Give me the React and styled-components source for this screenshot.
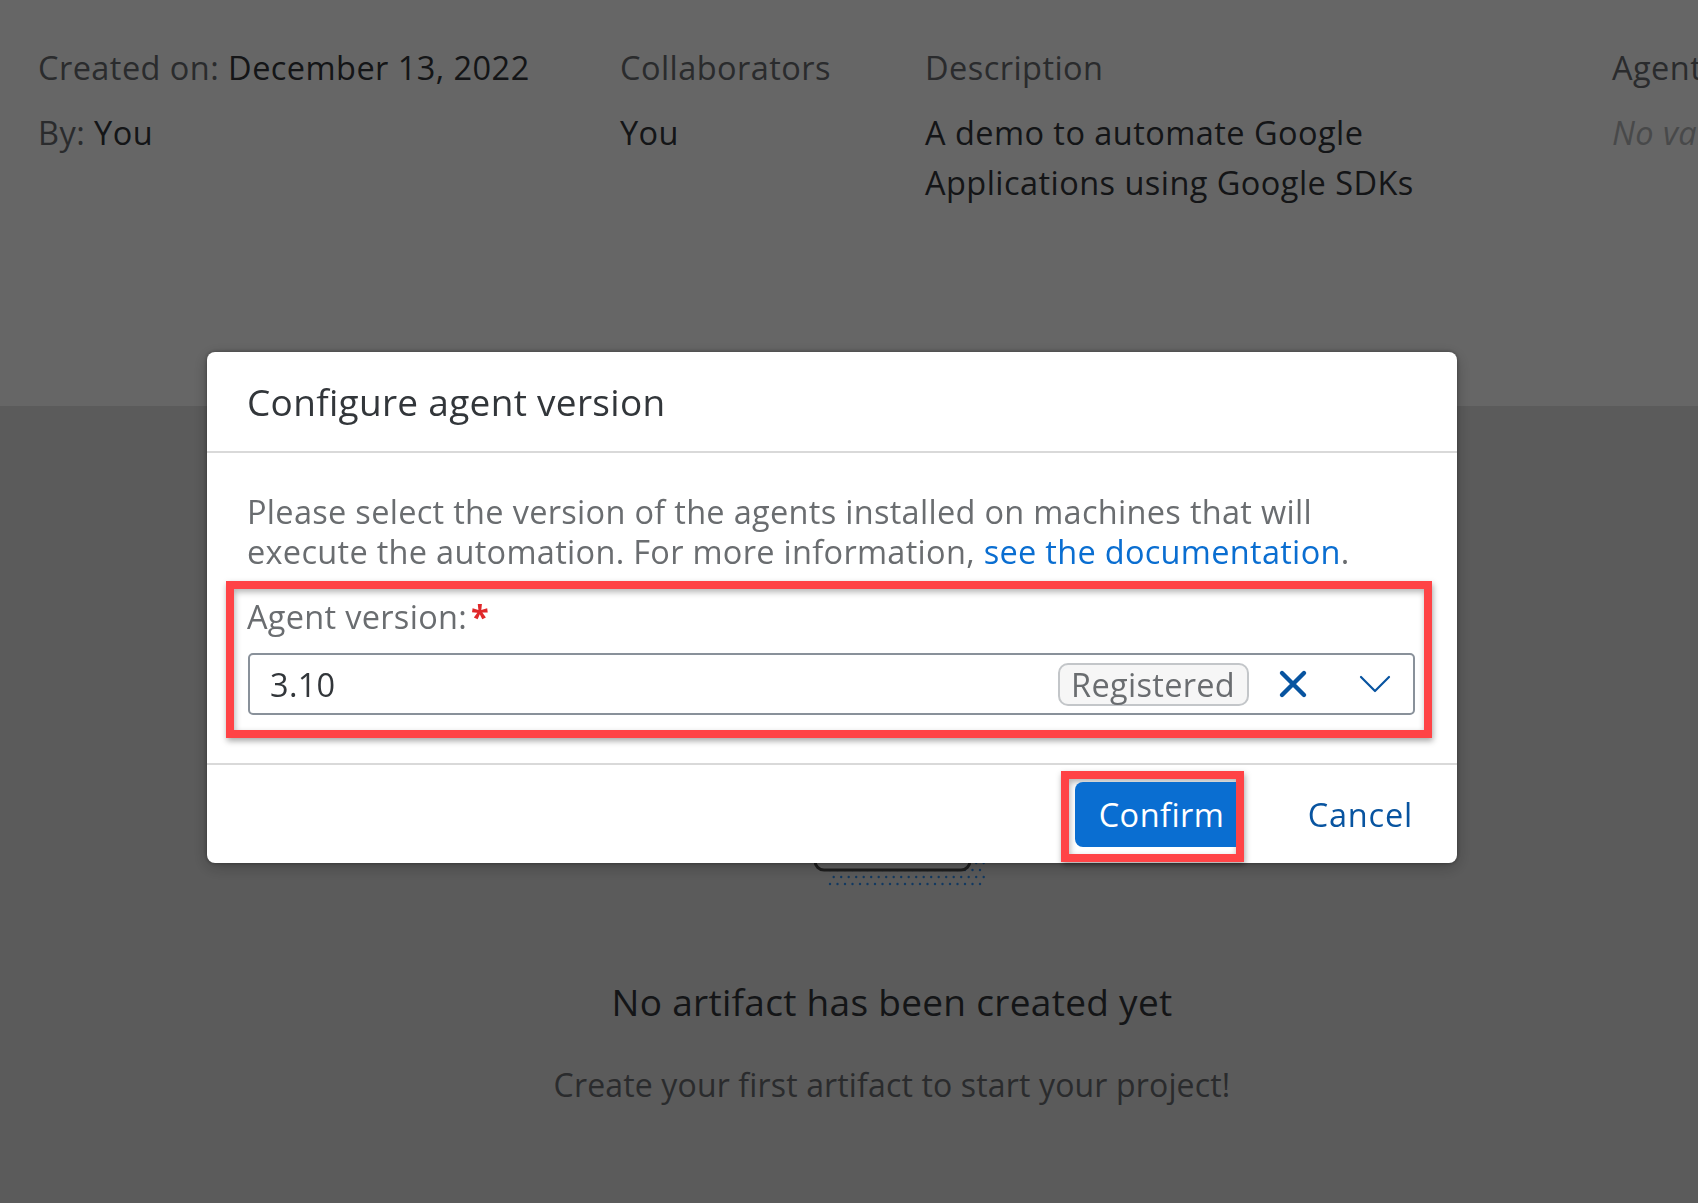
import React from "react";
import styled, { createGlobalStyle } from "styled-components";

const GlobalStyle = createGlobalStyle`
  html, body {
    margin: 0;
    padding: 0;
    overflow: hidden;
  }
  body {
    font-family: "Open Sans", "Noto Sans", Arial, sans-serif;
    color: #32363a;
  }
  * { box-sizing: border-box; }
`;

const Page = styled.div`
  width: 1698px;
  height: 1203px;
  display: flex;
  flex-direction: column;
  overflow: hidden;
  background: #e3e3e3;
`;

const ObjectHeader = styled.section`
  height: 406px;
  flex: none;
  background: #ffffff;
  padding: 43px 0 0 38px;
  display: grid;
  grid-template-columns: 582px 305px 687px 400px;
  align-content: start;
  font-size: 32.5px;
  letter-spacing: 0.45px;
  line-height: 50px;
`;

const InfoColumn = styled.div`
  display: flex;
  flex-direction: column;
  gap: 15px;
  white-space: ${(p) => (p.$wrap ? "normal" : "nowrap")};
`;

const InfoLine = styled.div`
  max-width: ${(p) => p.$max || "none"};
  color: ${(p) => (p.$muted ? "#6a6d70" : "#32363a")};
  font-style: ${(p) => (p.$italic ? "italic" : "normal")};
  ${(p) => p.$empty && "color: #b4b6b8;"}
`;

const Label = styled.span`
  color: #6a6d70;
`;

const Value = styled.span`
  color: #32363a;
`;

const EmptyState = styled.section`
  flex: 1;
  display: flex;
  flex-direction: column;
  align-items: center;
  padding: 234px 0 0 86px;
`;

const Illustration = styled.svg`
  display: block;
  width: 200px;
  height: 250px;
`;

const EmptyTitle = styled.div`
  margin-top: 88px;
  font-size: 37px;
  letter-spacing: 0.3px;
  line-height: 48px;
  color: #32363a;
`;

const EmptyText = styled.div`
  margin-top: 39px;
  font-size: 32px;
  letter-spacing: 0.15px;
  line-height: 40px;
  color: #6a6d70;
`;

const Overlay = styled.div`
  position: fixed;
  inset: 0;
  background: rgba(0, 0, 0, 0.6);
`;

const Dialog = styled.div`
  position: fixed;
  left: 207px;
  top: 352px;
  width: 1250px;
  height: 511px;
  background: #ffffff;
  border-radius: 8px;
  box-shadow: 0 0 4px rgba(0, 0, 0, 0.35), 0 4px 16px rgba(0, 0, 0, 0.25);
  display: flex;
  flex-direction: column;
`;

const DialogHeader = styled.header`
  height: 101px;
  flex: none;
  display: flex;
  align-items: center;
  padding: 0 40px;
  border-bottom: 2px solid #d9d9d9;
`;

const DialogTitle = styled.h2`
  margin: 0;
  font-size: 37px;
  letter-spacing: 0.3px;
  font-weight: 400;
  color: #32363a;
  line-height: 48px;
`;

const DialogBody = styled.div`
  padding: 39px 40px 25px 40px;
  display: flex;
  flex-direction: column;
  font-size: 32.5px;
  letter-spacing: 0.3px;
`;

const Intro = styled.p`
  margin: 0;
  line-height: 40px;
  color: #6a6d70;
`;

const DocLink = styled.a`
  color: #0a6ed1;
  text-decoration: none;
`;

const Highlight = styled.div`
  border: 8px solid #ff4346;
  box-shadow: 1px 3px 6px rgba(0, 0, 0, 0.35), inset 1px 3px 6px rgba(0, 0, 0, 0.3);
`;

const FieldHighlight = styled(Highlight)`
  margin: 9px -15px 0 -21px;
  padding: 8px 9px 15px 14px;
  display: flex;
  flex-direction: column;
  gap: 16px;
`;

const FieldLabel = styled.label`
  line-height: 40px;
  color: #6a6d70;
  margin-left: -1px;
  display: flex;
  align-items: baseline;
`;

const Required = styled.span`
  color: #e0282a;
  font-weight: 700;
  margin-left: 4px;
`;

const ComboBox = styled.div`
  height: 62px;
  border: 2px solid #89919a;
  border-radius: 5px;
  display: flex;
  align-items: center;
  padding-left: 20px;
  background: #fff;
`;

const ComboValue = styled.span`
  flex: 1;
  color: #32363a;
`;

const Tag = styled.span`
  height: 43px;
  display: inline-flex;
  align-items: center;
  padding: 0 12px 0 11px;
  border: 2px solid #c3c6c9;
  border-radius: 10px;
  background: #f6f6f6;
  color: #6a6d70;
  margin-right: 14px;
`;

const IconButton = styled.span`
  width: ${(p) => p.$w}px;
  height: 58px;
  display: flex;
  align-items: center;
  justify-content: center;
  margin-right: ${(p) => p.$mr || 0}px;
  color: #0854a0;
`;

const DialogFooter = styled.footer`
  margin-top: auto;
  height: 101px;
  border-top: 2px solid #d9d9d9;
  display: flex;
  justify-content: flex-end;
  align-items: flex-end;
  padding: 0 24px 1px 0;
  gap: 44px;
  font-size: 32.5px;
  letter-spacing: 0.45px;
`;

const ConfirmHighlight = styled(Highlight)`
  width: 183px;
  height: 91px;
  padding: 3px 0 7px 6px;
  overflow: hidden;
`;

const ConfirmButton = styled.button`
  width: 180px;
  height: 65px;
  border: none;
  border-radius: 8px;
  background: #0a6ed1;
  color: #ffffff;
  font: inherit;
  letter-spacing: inherit;
  padding: 0 0 0 24px;
  text-align: left;
`;

const CancelButton = styled.button`
  height: 65px;
  margin-bottom: 15px;
  border: none;
  background: transparent;
  color: #0854a0;
  font: inherit;
  letter-spacing: 0.8px;
  padding: 0 20px;
`;

export default function App() {
  const dots = [];
  for (let r = 0; r < 30; r++) {
    for (let c = 0; c < 21; c++) {
      dots.push(
        <circle key={`${r}-${c}`} cx={38 + c * 7.5 + (r % 2) * 3.7} cy={244 - r * 7} r="1.2" fill="#2a8cf0" />
      );
    }
  }
  return (
    <>
      <GlobalStyle />
      <Page>
        <ObjectHeader>
          <InfoColumn>
            <InfoLine>
              <Label>Created on: </Label>
              <Value>December 13, 2022</Value>
            </InfoLine>
            <InfoLine>
              <Label>By: </Label>
              <Value>You</Value>
            </InfoLine>
          </InfoColumn>
          <InfoColumn>
            <InfoLine $muted>Collaborators</InfoLine>
            <InfoLine>You</InfoLine>
          </InfoColumn>
          <InfoColumn $wrap>
            <InfoLine $muted>Description</InfoLine>
            <InfoLine $max="540px">A demo to automate Google Applications using Google SDKs</InfoLine>
          </InfoColumn>
          <InfoColumn>
            <InfoLine $muted>Agent Version</InfoLine>
            <InfoLine $italic $empty>No value</InfoLine>
          </InfoColumn>
        </ObjectHeader>
        <EmptyState>
          <Illustration viewBox="0 0 200 250">
            {dots}
            <rect x="23" y="60" width="155" height="170" rx="9" fill="#f1f1f1" stroke="#4a4a4a" strokeWidth="3" />
          </Illustration>
          <EmptyTitle>No artifact has been created yet</EmptyTitle>
          <EmptyText>Create your first artifact to start your project!</EmptyText>
        </EmptyState>
      </Page>
      <Overlay />
      <Dialog role="dialog" aria-label="Configure agent version">
        <DialogHeader>
          <DialogTitle>Configure agent version</DialogTitle>
        </DialogHeader>
        <DialogBody>
          <Intro>
            Please select the version of the agents installed on machines that will execute the automation. For more
            information, <DocLink href="#">see the documentation</DocLink>.
          </Intro>
          <FieldHighlight>
            <FieldLabel>
              Agent version:<Required>*</Required>
            </FieldLabel>
            <ComboBox>
              <ComboValue>3.10</ComboValue>
              <Tag>Registered</Tag>
              <IconButton $w={60} $mr={14}>
                <svg width="30" height="30" viewBox="0 0 30 30">
                  <path d="M4 4 L26 26 M26 4 L4 26" stroke="currentColor" strokeWidth="4.4" strokeLinecap="round" />
                </svg>
              </IconButton>
              <IconButton $w={76}>
                <svg width="32" height="18" viewBox="0 0 32 18">
                  <path d="M2 2 L16 16 L30 2" fill="none" stroke="currentColor" strokeWidth="2.2" strokeLinecap="round" strokeLinejoin="round" />
                </svg>
              </IconButton>
            </ComboBox>
          </FieldHighlight>
        </DialogBody>
        <DialogFooter>
          <ConfirmHighlight>
            <ConfirmButton>Confirm</ConfirmButton>
          </ConfirmHighlight>
          <CancelButton>Cancel</CancelButton>
        </DialogFooter>
      </Dialog>
    </>
  );
}
